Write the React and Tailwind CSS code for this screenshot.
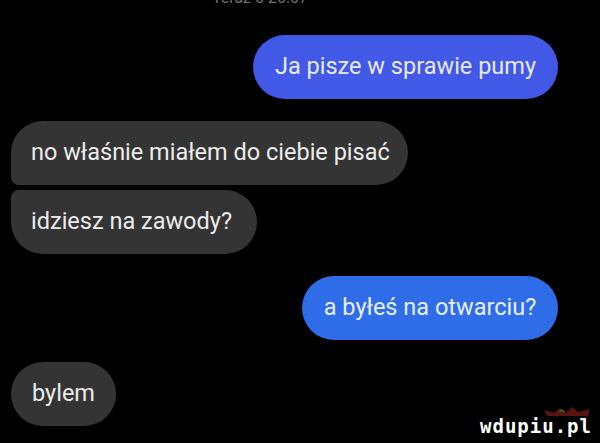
import React from 'react';

const Bubble = ({ children, variant, className = '' }) => {
  const colors = {
    blue: 'bg-[#4258e6] text-[#e8eaf6]',
    sky: 'bg-[#2f6de8] text-[#e6eefa]',
    grey: 'bg-[#343434] text-[#ececec]',
  };
  return (
    <div className={`h-[64px] flex items-center px-5 text-[23.5px] leading-none whitespace-nowrap ${colors[variant]} ${className}`}>
      {children}
    </div>
  );
};

const Watermark = () => (
  <div className="flex flex-col items-end">
    <svg width="46" height="10" viewBox="0 0 46 10" className="mr-[2px]">
      <path d="M0 3 L10 6 L16 1 L22 6 L28 0 L34 5 L46 2 L44 9 L3 9 Z" fill="#5a1410" />
      <path d="M14 5 L18 2 L22 5 Z" fill="#3b5a1a" />
    </svg>
    <div className="text-white font-bold text-[19px] leading-none tracking-[1px]" style={{ fontFamily: '"DejaVu Sans Mono", monospace' }}>
      wdupiu.pl
    </div>
  </div>
);

export default function App() {
  return (
    <div className="w-[600px] h-[443px] bg-black relative overflow-hidden" style={{ fontFamily: 'Roboto, "Noto Sans", sans-serif' }}>
      <div className="h-[6px] overflow-hidden flex justify-center">
        <div className="text-[#6e6e6e] text-[16px] leading-none -mt-[10px] ml-[-80px]">Teraz o 20:07</div>
      </div>
      <div className="flex flex-col pt-[29px] pl-[11px] pr-[42px]">
        <Bubble variant="blue" className="self-end w-[305px] justify-center rounded-full">
          Ja pisze w sprawie pumy
        </Bubble>
        <Bubble variant="grey" className="self-start w-[397px] mt-[22px] rounded-tl-[32px] rounded-bl-[8px] rounded-r-[32px]">
          no właśnie miałem do ciebie pisać
        </Bubble>
        <Bubble variant="grey" className="self-start w-[246px] mt-[5px] rounded-tl-[8px] rounded-bl-[32px] rounded-r-[32px]">
          idziesz na zawody?
        </Bubble>
        <Bubble variant="sky" className="self-end w-[256px] justify-center mt-[22px] rounded-full">
          a byłeś na otwarciu?
        </Bubble>
        <Bubble variant="grey" className="self-start w-[105px] justify-center mt-[22px] rounded-full">
          bylem
        </Bubble>
      </div>
      <div className="absolute right-[8px] bottom-[7px]">
        <Watermark />
      </div>
    </div>
  );
}
